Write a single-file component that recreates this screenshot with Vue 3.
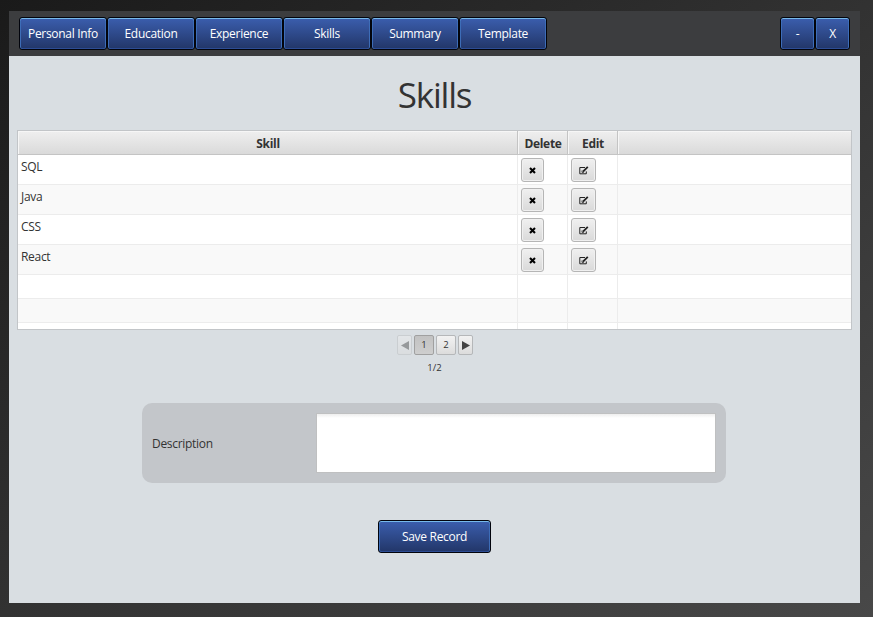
<script setup>
const tabs = ['Personal Info', 'Education', 'Experience', 'Skills', 'Summary', 'Template']
const skills = ['SQL', 'Java', 'CSS', 'React']
</script>

<template>
  <div class="desktop">
    <main class="window">
      <header class="bar">
        <nav class="group">
          <button v-for="t in tabs" :key="t" class="blue tab">{{ t }}</button>
        </nav>
        <div class="group">
          <button class="blue ctl">-</button>
          <button class="blue ctl">X</button>
        </div>
      </header>

      <h1 class="title">Skills</h1>

      <section class="table">
        <div class="row head">
          <div class="cell">Skill</div>
          <div class="cell">Delete</div>
          <div class="cell">Edit</div>
          <div class="cell"></div>
        </div>
        <div v-for="s in skills" :key="s" class="row">
          <div class="cell">{{ s }}</div>
          <div class="cell">
            <button class="small del">
              <svg width="7" height="7" viewBox="0 0 7 7"><path d="M1 1L6 6M6 1L1 6" stroke="#000" stroke-width="2.1" /></svg>
            </button>
          </div>
          <div class="cell">
            <button class="small edit">
              <svg width="10" height="9" viewBox="0 0 10 9" fill="none" stroke="#222">
                <path d="M6 1.5H.8V7.8H7.3V5.4" />
                <path d="M4 5.6L8.8 .9" stroke-width="1.9" />
                <path d="M3 4.5V6.4H4.9" stroke-width=".8" />
              </svg>
            </button>
          </div>
          <div class="cell"></div>
        </div>
        <div v-for="n in 3" :key="n" class="row empty">
          <div v-for="c in 4" :key="c" class="cell"></div>
        </div>
      </section>

      <div class="pager">
        <button class="page arrow off"><svg width="8" height="9" viewBox="0 0 8 9"><path d="M8 0V9L0 4.5Z" fill="#333" /></svg></button>
        <button class="page current">1</button>
        <button class="page">2</button>
        <button class="page arrow"><svg width="8" height="9" viewBox="0 0 8 9"><path d="M0 0V9L8 4.5Z" fill="#444" /></svg></button>
      </div>
      <div class="count">1/2</div>

      <section class="form">
        <label class="label" for="description">Description</label>
        <textarea id="description" class="area"></textarea>
      </section>

      <button class="blue save">Save Record</button>
    </main>
  </div>
</template>

<style>
body { margin: 0; overflow: hidden; }
</style>

<style scoped>
* { box-sizing: border-box; }
.desktop {
  width: 873px;
  height: 617px;
  padding: 11px 13px 14px 9px;
  background: linear-gradient(to bottom right, #1a1a1a, #323232 50%, #484848);
  font-family: "Open Sans", "Noto Sans", sans-serif;
  font-size: 12px;
  letter-spacing: -0.3px;
  color: #333;
}
button { font: inherit; letter-spacing: inherit; padding: 0; margin: 0; white-space: nowrap; }
.window {
  width: 851px;
  height: 592px;
  background: #d9dee2;
  display: flex;
  flex-direction: column;
  align-items: center;
}
.bar {
  align-self: stretch;
  height: 45px;
  flex: none;
  padding: 6px 10px;
  background: #3c3d3f;
  display: flex;
  justify-content: space-between;
}
.group { display: flex; }
.blue {
  height: 33px;
  border: 1px solid #02040c;
  border-radius: 3px;
  color: #fff;
  background: linear-gradient(#3b5eae, #223668);
  box-shadow: inset 0 1px #76b8ea, inset 1px 0 #3d6db8, inset -1px 0 #3d6db8, inset 0 -1px #2c4c94;
}
.tab { width: 88px; }
.ctl { width: 35px; }
.title {
  margin: 16px 0 0;
  height: 58px;
  line-height: 46px;
  font-size: 35px;
  font-weight: 400;
  letter-spacing: -1.2px;
}
.table {
  width: 835px;
  height: 200px;
  flex: none;
  border: 1px solid #c2c5c8;
  background: #fff;
  overflow: hidden;
}
.row {
  display: grid;
  grid-template-columns: 500px 50px 50px 1fr;
  height: 30px;
}
.row:nth-child(odd) { background: #f9f9f9; }
.empty { height: 24px; }
.cell {
  border-right: 1px solid #ececec;
  border-bottom: 1px solid #ececec;
  padding: 3px 3px 0;
  line-height: 17px;
  display: flex;
  align-items: flex-start;
}
.cell:last-child { border-right: 0; }
.row.head { height: 24px; background: linear-gradient(#efefef, #d9d9d9); font-weight: 700; }
.head .cell {
  border-color: #c4c4c4;
  justify-content: center;
  padding: 4px 0 0 1px;
  box-shadow: inset 1px 1px #f6f6f6;
}
.small {
  height: 24px;
  border: 1px solid #b5b5b5;
  border-radius: 3px;
  background: linear-gradient(#f0f0f0, #d9d9d9);
  box-shadow: inset 0 0 0 1px #f0f0f0;
  display: flex;
  align-items: center;
  justify-content: center;
}
.del { width: 23px; }
.edit { width: 25px; }
.pager { display: flex; gap: 2px; margin-top: 5px; padding-left: 1px; }
.page {
  width: 20px;
  height: 20px;
  border: 1px solid #b5b7b9;
  border-radius: 2px;
  background: linear-gradient(#f2f2f2, #dcdcdc);
  color: #333;
  font-size: 9.5px;
  letter-spacing: 0;
  line-height: 17px;
  display: flex;
  justify-content: center;
}
.current { background: linear-gradient(#c2c2c2, #cecece); border-color: #a0a0a0; }
.arrow { width: 15px; align-items: center; }
.off { opacity: 0.4; }
.count { margin-top: 6px; height: 14px; line-height: 14px; font-size: 9.5px; letter-spacing: 0; }
.form {
  width: 584px;
  height: 80px;
  margin: 28px 1px 0 0;
  padding: 0 10px;
  border-radius: 10px;
  background: #c3c6ca;
  display: flex;
  align-items: center;
  justify-content: space-between;
}
.area {
  width: 400px;
  height: 60px;
  border: 1px solid #bfc0c1;
  background: linear-gradient(#eee, #fff 4px);
  resize: none;
  outline: 0;
}
.save { width: 113px; margin-top: 37px; }
</style>
